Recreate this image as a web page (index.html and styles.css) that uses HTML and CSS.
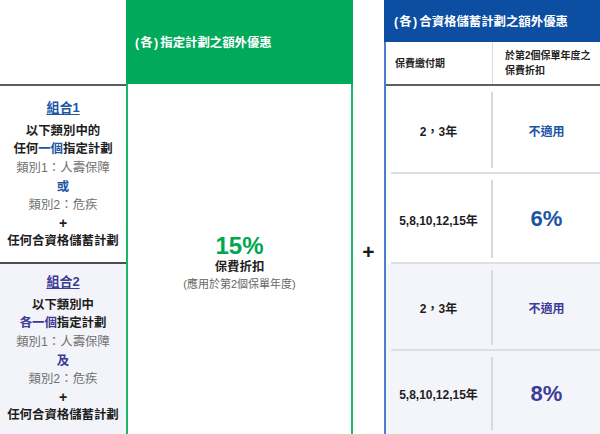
FILE: index.html
```html
<!DOCTYPE html>
<html lang="zh-Hant">
<head>
<meta charset="utf-8">
<link rel="stylesheet" href="styles.css">
</head>
<body>
<div class="page">
  <div class="col-left">
    <div class="head-blank"></div>
    <div class="group g1">
      <div class="g-title">組合1</div>
      <div class="b">以下類別中的</div>
      <div class="b">任何<span class="hl">一個</span>指定計劃</div>
      <div class="muted">類別1：人壽保障</div>
      <div class="b hl">或</div>
      <div class="muted">類別2：危疾</div>
      <div class="b pl">+</div>
      <div class="b">任何合資格儲蓄計劃</div>
    </div>
    <div class="group g2">
      <div class="g-title">組合2</div>
      <div class="b">以下類別中</div>
      <div class="b"><span class="hl">各一個</span>指定計劃</div>
      <div class="muted">類別1：人壽保障</div>
      <div class="b hl">及</div>
      <div class="muted">類別2：危疾</div>
      <div class="b pl">+</div>
      <div class="b">任何合資格儲蓄計劃</div>
    </div>
  </div>

  <div class="col-green">
    <div class="green-head"><span class="paren">(各)</span>指定計劃之額外優惠</div>
    <div class="green-body">
      <div class="pct">15%</div>
      <div class="label">保費折扣</div>
      <div class="note">(應用於第2個保單年度)</div>
    </div>
  </div>

  <div class="plus">+</div>

  <div class="col-blue">
    <div class="blue-head"><span class="paren">(各)</span>合資格儲蓄計劃之額外優惠</div>
    <div class="blue-sub">
      <div class="sub-cell">保費繳付期</div>
      <div class="sub-cell">於第2個保單年度之<br>保費折扣</div>
    </div>
    <div class="rgroup rg1">
      <div class="row r1">
        <div class="cell period">2，3年</div>
        <div class="cell disc na">不適用</div>
      </div>
      <div class="sep"></div>
      <div class="row r2">
        <div class="cell period">5,8,10,12,15年</div>
        <div class="cell disc big">6%</div>
      </div>
    </div>
    <div class="sep"></div>
    <div class="rgroup rg2">
      <div class="row r3">
        <div class="cell period">2，3年</div>
        <div class="cell disc na">不適用</div>
      </div>
      <div class="sep"></div>
      <div class="row r4">
        <div class="cell period">5,8,10,12,15年</div>
        <div class="cell disc big">8%</div>
      </div>
    </div>
  </div>
</div>
</body>
</html>
```

FILE: styles.css
```css
* { box-sizing: border-box; }
html, body {
  margin: 0;
  padding: 0;
  background: #ffffff;
}
body {
  font-family: "Liberation Sans", "Noto Sans CJK TC", sans-serif;
  color: #1e1e1e;
  width: 600px;
  height: 434px;
  overflow: hidden;
}
.page {
  display: grid;
  grid-template-columns: 126px 227px 31px 216px;
  width: 600px;
  height: 434px;
}

/* left column */
.col-left {
  display: flex;
  flex-direction: column;
}
.head-blank {
  height: 86px;
  border-bottom: 2px solid #5c5c5c;
}
.group {
  display: flex;
  flex-direction: column;
  align-items: center;
  justify-content: center;
  text-align: center;
  font-size: 12.4px;
  line-height: 18.5px;
}
.g1 {
  height: 178px;
  border-bottom: 2px solid #4e4e4e;
  --hl: #1c56a6;
  padding-top: 2px;
}
.g2 {
  flex: 1;
  background: #f3f4f9;
  --hl: #3d3b97;
}
.g-title {
  font-weight: bold;
  font-size: 13px;
  color: var(--hl);
  text-decoration: underline;
  text-underline-offset: 2px;
  margin-bottom: 4px;
}
.b { font-weight: bold; }
.pl { font-size: 14px; line-height: 17px; }
.hl { color: var(--hl); }
.muted { color: #707070; line-height: 19px; }

/* green column */
.col-green {
  display: flex;
  flex-direction: column;
}
.green-head {
  height: 84px;
  background: #00aa5a;
  color: #ffffff;
  font-weight: bold;
  font-size: 12.4px;
  display: flex;
  align-items: center;
  padding-left: 9px;
}
.paren { letter-spacing: 1.2px; margin-right: 1px; }
.green-body {
  flex: 1;
  border-left: 2px solid #1cb768;
  border-right: 2px solid #1cb768;
  display: flex;
  flex-direction: column;
  align-items: center;
  justify-content: center;
  padding-top: 6px;
}
.pct {
  color: #00a651;
  font-weight: bold;
  font-size: 24px;
  line-height: 26px;
}
.label {
  font-weight: bold;
  font-size: 12.4px;
  line-height: 17px;
}
.note {
  color: #666666;
  font-size: 11px;
  line-height: 16px;
}

/* plus */
.plus {
  display: flex;
  align-items: center;
  justify-content: center;
  font-weight: bold;
  font-size: 21px;
  padding-top: 70px;
  color: #1a1a1a;
}

/* blue column */
.col-blue {
  display: flex;
  flex-direction: column;
  border-left: 2px solid #4a7fd0;
}
.blue-head {
  height: 42px;
  background: #0b4ea2;
  color: #ffffff;
  font-weight: bold;
  font-size: 12.4px;
  display: flex;
  align-items: center;
  margin-left: -2px;
  padding-left: 10px;
}
.blue-sub {
  height: 44px;
  display: grid;
  grid-template-columns: 107px 1fr;
  border-bottom: 2px solid #606060;
}
.sub-cell {
  display: flex;
  align-items: center;
  font-weight: bold;
  font-size: 10px;
  line-height: 15px;
  padding-left: 9px;
  color: #222222;
}
.sub-cell:first-child {
  border-right: 1.5px solid #d9d9df;
}
.sub-cell:last-child { padding-left: 12px; }

.rgroup {
  display: flex;
  flex-direction: column;
}
.rg1 { --c: #1a55a5; }
.rg2 { --c: #3d3b97; background: #f4f5fa; flex: 1; }
.row {
  display: grid;
  grid-template-columns: 107px 1fr;
  padding: 6px 0 4px;
}
.r1 { height: 86px; }
.r2 { height: 88px; }
.r3 { height: 85px; }
.r4 { flex: 1; }
.sep {
  height: 2px;
  margin-left: 5px;
  background: #dedee5;
}
.cell {
  display: flex;
  align-items: center;
  justify-content: center;
  font-weight: bold;
}
.period {
  border-right: 2px solid #d8d8de;
  font-size: 12px;
  color: #1e1e1e;
}
.na {
  font-size: 12px;
  color: var(--c);
}
.big {
  font-size: 22px;
  color: var(--c);
}
```
